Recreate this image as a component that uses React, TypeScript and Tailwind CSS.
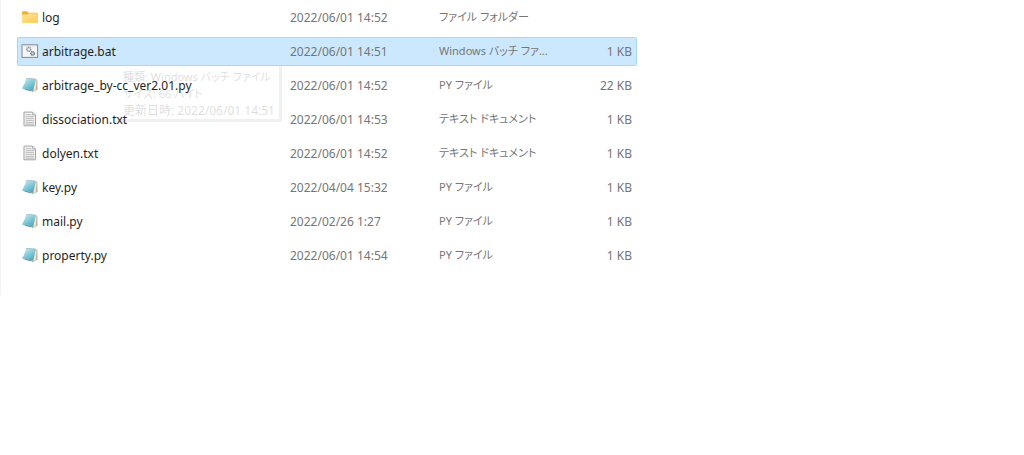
type FileKind = "folder" | "batch" | "python" | "text";

interface FileEntry {
  name: string;
  date: string;
  type: string;
  size: string;
  kind: FileKind;
  selected?: boolean;
}

const files: FileEntry[] = [
  { name: "log", date: "2022/06/01 14:52", type: "ファイル フォルダー", size: "", kind: "folder" },
  { name: "arbitrage.bat", date: "2022/06/01 14:51", type: "Windows バッチ ファ...", size: "1 KB", kind: "batch", selected: true },
  { name: "arbitrage_by-cc_ver2.01.py", date: "2022/06/01 14:52", type: "PY ファイル", size: "22 KB", kind: "python" },
  { name: "dissociation.txt", date: "2022/06/01 14:53", type: "テキスト ドキュメント", size: "1 KB", kind: "text" },
  { name: "dolyen.txt", date: "2022/06/01 14:52", type: "テキスト ドキュメント", size: "1 KB", kind: "text" },
  { name: "key.py", date: "2022/04/04 15:32", type: "PY ファイル", size: "1 KB", kind: "python" },
  { name: "mail.py", date: "2022/02/26 1:27", type: "PY ファイル", size: "1 KB", kind: "python" },
  { name: "property.py", date: "2022/06/01 14:54", type: "PY ファイル", size: "1 KB", kind: "python" },
];

function FileIcon({ kind }: { kind: FileKind }) {
  return (
    <svg viewBox="0 0 16 16" className="h-4 w-4 shrink-0 overflow-visible" aria-hidden="true">
      {kind === "folder" && (
        <>
          <defs>
            <linearGradient id="folder" x1="0" y1="0" x2="1" y2="1">
              <stop offset="0" stopColor="#ffe594" />
              <stop offset="1" stopColor="#fbcb58" />
            </linearGradient>
          </defs>
          <path d="M0 2.2Q0 1.2 1 1.2H5L6.5 2.7H15Q16 2.7 16 3.7V7H0Z" fill="#edb137" />
          <path d="M0 4.5H5.5L7 3.2H15.2Q16 3.2 16 4V12.2Q16 13 15.2 13H.8Q0 13 0 12.2Z" fill="url(#folder)" />
        </>
      )}
      {kind === "batch" && (
        <>
          <rect x="0" y=".8" width="15.6" height="12.6" fill="#f5f5f6" stroke="#85898d" />
          <path d="M.5 1.8H15.1" stroke="#d0d2d4" />
          <circle cx="6.7" cy="5.3" r="2" fill="#e7edf1" stroke="#93a1ad" strokeWidth="1.6" strokeDasharray="1.2 .35" />
          <circle cx="10.6" cy="9.4" r="1.7" fill="#d4dce2" stroke="#778490" strokeWidth="1.6" strokeDasharray="1.1 .35" />
        </>
      )}
      {kind === "python" && (
        <>
          <defs>
            <linearGradient id="notebook" x1="0" y1="0" x2=".7" y2="1">
              <stop offset="0" stopColor="#d0eff4" />
              <stop offset=".5" stopColor="#8ccddb" />
              <stop offset="1" stopColor="#48a5bd" />
            </linearGradient>
          </defs>
          <path d="M13.5 .8L15.4 2.2L15.5 11.8L11.5 13.8Z" fill="#b8ad98" />
          <path d="M13.3 1.2L14.6 2.8L13.8 12L11 13.4Z" fill="#efe6d5" />
          <path d="M4.2 .6Q8.8 0 13.8 1.1L11.2 13Q6 10.6 0 10.5Q3 5.5 4.2 .6Z" fill="url(#notebook)" />
          <path d="M0 10.5Q6 10.6 11.2 13L11.8 13.8Q5.5 12.7 0 10.5Z" fill="#5d8b99" />
          <path d="M4.2 .6Q8.8 0 13.8 1.1" fill="none" stroke="#a8bbc0" strokeWidth=".8" />
        </>
      )}
      {kind === "text" && (
        <>
          <path d="M2 .1H10.6L13.5 3V13.8H2Z" fill="#f4f4f4" stroke="#a3a3a3" />
          <path d="M10.6 .1V3H13.5" fill="#e2e2e2" stroke="#a3a3a3" strokeWidth=".8" />
          <path d="M3.5 2.7H9.5M3.5 4.7H12M3.5 6.7H12M3.5 8.7H12M3.5 10.7H12M3.5 12.2H12" stroke="#b9b9b9" />
        </>
      )}
    </svg>
  );
}

function FileRow({ file }: { file: FileEntry }) {
  const cell = file.selected
    ? "h-[29px] border-y border-[#a6d8ff] bg-[#cce8ff] p-0"
    : "h-[29px] border-y border-transparent p-0";

  return (
    <tr aria-selected={file.selected}>
      <td className={`${cell} rounded-l-xs border-l pl-1`}>
        <div className="flex items-center gap-1 text-[#1f1f1f]">
          <FileIcon kind={file.kind} />
          <span className="z-10">{file.name}</span>
        </div>
      </td>
      <td className={cell}>{file.date}</td>
      <td className={`${cell} text-[11px]`}>{file.type}</td>
      <td className={`${cell} rounded-r-xs border-r pr-1 text-right`}>{file.size}</td>
    </tr>
  );
}

export default function App() {
  return (
    <main className="min-h-screen bg-white font-['Noto_Sans','Noto_Sans_CJK_JP',sans-serif] text-xs text-[#767676]" lang="ja">
      <section className="relative border-l border-[#f3f3f3] pb-5 pl-4">
        <table className="-mt-0.5 w-full max-w-[620px] table-fixed border-separate border-spacing-x-0 border-spacing-y-[5px] whitespace-nowrap [font-feature-settings:'palt']">
          <colgroup>
            <col className="w-[273px]" />
            <col className="w-[149px]" />
            <col className="w-[124px]" />
            <col />
          </colgroup>
          <tbody>
            {files.map((file) => (
              <FileRow key={file.name} file={file} />
            ))}
          </tbody>
        </table>

        {/* Tooltip fading in under the selected file */}
        <div
          role="tooltip"
          className="absolute left-[116px] top-[68px] w-[165px] whitespace-nowrap border-b-3 border-r-3 border-[#f0f0f0] bg-white/20 pl-1.5 pt-0.5 leading-[17px] text-[#767676]/25 [font-feature-settings:'palt']"
        >
          <p className="text-[11px] leading-[17px]">種類: Windows バッチ ファイル</p>
          <p className="text-[11px] leading-[17px]">サイズ: 66 バイト</p>
          <p>更新日時: 2022/06/01 14:51</p>
        </div>
      </section>
    </main>
  );
}
